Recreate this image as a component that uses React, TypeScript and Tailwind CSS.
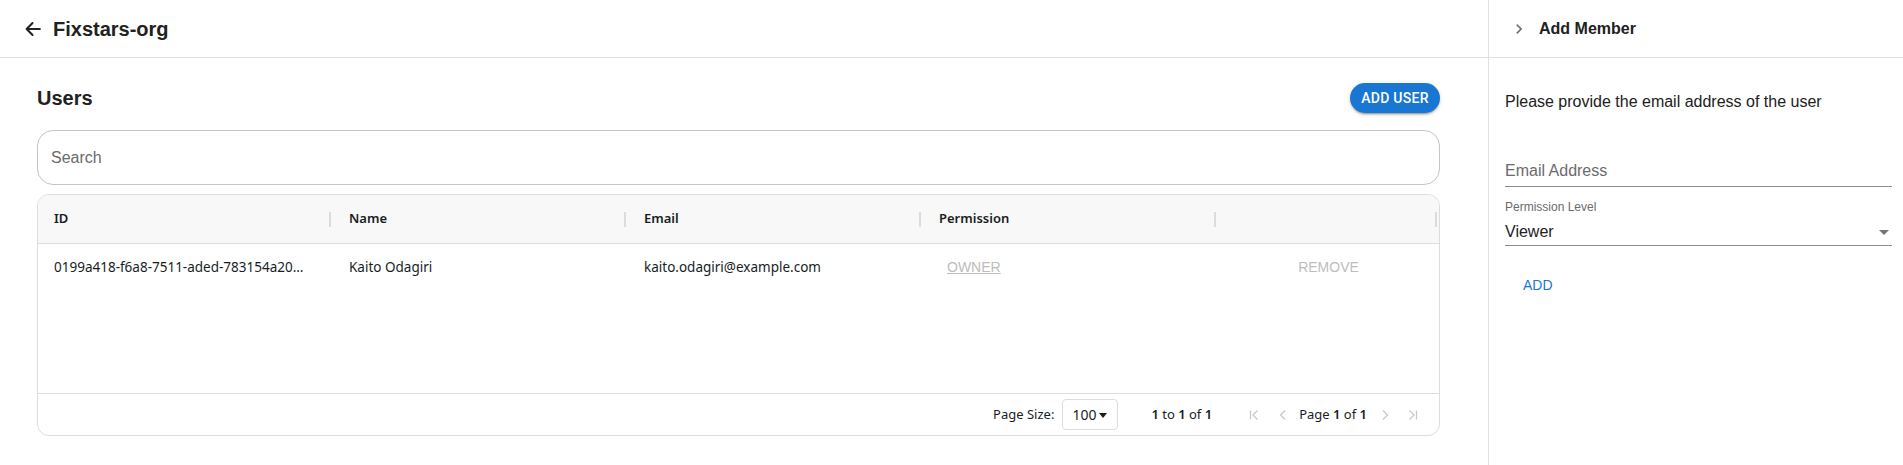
import React from 'react';

const arial = '[font-family:"Liberation_Sans",Arial,sans-serif]';
const grid = '[font-family:"Noto_Sans","Open_Sans",sans-serif]';

const columns = [
    { key: 'id', label: 'ID', width: 'w-[295px]' },
    { key: 'name', label: 'Name', width: 'w-[295px]' },
    { key: 'email', label: 'Email', width: 'w-[295px]' },
    { key: 'permission', label: 'Permission', width: 'w-[295px]' },
    { key: 'actions', label: '', width: 'flex-1' }
];

const users = [
    {
        id: '0199a418-f6a8-7511-aded-783154a20d6f',
        name: 'Kaito Odagiri',
        email: 'kaito.odagiri@example.com',
        permission: 'OWNER'
    }
];

const ArrowBack = () => (
    <svg width="22" height="22" viewBox="0 0 24 24" className="fill-none stroke-[#212121]" strokeWidth="2.2" strokeLinecap="round" strokeLinejoin="round">
        <path d="M19.5 12H5M11.5 5.5 5 12l6.5 6.5" />
    </svg>
);

const PagerIcon = ({ d }: { d: string }) => (
    <svg width="16" height="16" viewBox="0 0 16 16" className="fill-none stroke-[#c9c9c9]" strokeWidth="1.3">
        <path d={d} />
    </svg>
);

const App = () => {
    return (
        <div className={`flex w-[1903px] h-[465px] bg-white text-[#212121] ${arial}`}>
            <div className="flex flex-col flex-1 min-w-0">
                <div className="flex items-center gap-[9px] h-[58px] shrink-0 border-b border-[#e0e0e0] pl-[22px]">
                    <ArrowBack />
                    <h1 className="text-[20px] font-bold leading-none">Fixstars-org</h1>
                </div>

                <div className="flex flex-col pl-[37px] pr-12">
                    <div className="flex items-center justify-between h-[72px] pt-[8px]">
                        <h2 className="text-[20px] font-bold">Users</h2>
                        <button className="h-[30px] w-[90px] rounded-full bg-[#1976d2] text-white text-[14px] font-medium [font-family:Roboto,sans-serif] tracking-[0.02em] shadow-[0_3px_1px_-2px_rgba(0,0,0,0.2),0_2px_2px_0_rgba(0,0,0,0.14),0_1px_5px_0_rgba(0,0,0,0.12)]">
                            ADD USER
                        </button>
                    </div>

                    <div className="h-[55px] rounded-[16px] border border-[#c4c4c4] flex items-center px-[13px]">
                        <span className="text-[16px] text-[#6b6b6b]">Search</span>
                    </div>

                    <div className={`mt-[9px] h-[242px] rounded-[12px] border border-[#dddddd] flex flex-col overflow-hidden ${grid}`}>
                        <div className="flex h-[49px] shrink-0 bg-[#f8f8f8] border-b border-[#dddddd]">
                            {columns.map(col => (
                                <div key={col.key} className={`${col.width} relative flex items-center pl-[16px] text-[13px] font-semibold text-[#181d1f]`}>
                                    {col.label}
                                    <span className="absolute right-[2px] top-[17px] h-[15px] w-[2px] bg-[#dcdcdc]" />
                                </div>
                            ))}
                        </div>

                        <div className="flex-1">
                            {users.map(user => (
                                <div key={user.id} className="flex h-[46px] items-center text-[13.5px] text-[#181d1f]">
                                    <div className="w-[295px] pl-[16px]">
                                        <div className="w-[257px] truncate">{user.id}</div>
                                    </div>
                                    <div className="w-[295px] pl-[16px]">{user.name}</div>
                                    <div className="w-[295px] pl-[16px]">{user.email}</div>
                                    <div className="w-[295px] pl-[24px]">
                                        <span className={`${arial} text-[14px] underline text-[#bdbdbd]`}>{user.permission}</span>
                                    </div>
                                    <div className="flex-1 flex justify-center">
                                        <span className={`${arial} text-[14px] text-[#bdbdbd]`}>REMOVE</span>
                                    </div>
                                </div>
                            ))}
                        </div>

                        <div className="flex items-center justify-end h-[42px] shrink-0 border-t border-[#dddddd] text-[13px] text-[#181d1f] pr-[18px]">
                            <span>Page Size:</span>
                            <div className="ml-[8px] flex items-center gap-[2px] h-[31px] w-[56px] rounded-[4px] border border-[#dddddd] pl-[9px]">
                                <span className="text-[14px]">100</span>
                                <svg width="10" height="10" viewBox="0 0 10 10" className="fill-[#181d1f]">
                                    <path d="M1 3h8L5 8z" />
                                </svg>
                            </div>
                            <span className="ml-[33px]">
                                <strong className="font-semibold">1</strong> to <strong className="font-semibold">1</strong> of <strong className="font-semibold">1</strong>
                            </span>
                            <div className="ml-[34px] flex items-center">
                                <PagerIcon d="M4.5 3.5v9M11.5 3.5L7 8l4.5 4.5" />
                                <span className="ml-[13px]"><PagerIcon d="M10 3.5L5.5 8l4.5 4.5" /></span>
                                <span className="ml-[8px]">
                                    Page <strong className="font-semibold">1</strong> of <strong className="font-semibold">1</strong>
                                </span>
                                <span className="ml-[10px]"><PagerIcon d="M6 3.5L10.5 8 6 12.5" /></span>
                                <span className="ml-[12px]"><PagerIcon d="M4.5 3.5L9 8l-4.5 4.5M11.5 3.5v9" /></span>
                            </div>
                        </div>
                    </div>
                </div>
            </div>

            <div className="flex flex-col w-[415px] shrink-0 border-l border-[#e0e0e0]">
                <div className="flex items-center h-[58px] shrink-0 border-b border-[#e0e0e0] pl-[20px] gap-[10px]">
                    <svg width="20" height="20" viewBox="0 0 24 24" className="fill-[#757575]">
                        <path d="M10 6 8.59 7.41 13.17 12l-4.58 4.59L10 18l6-6z" />
                    </svg>
                    <span className="text-[16px] font-bold">Add Member</span>
                </div>

                <div className="flex flex-col pl-[16px] pr-[11px]">
                    <p className="mt-[34px] text-[16px] text-[#212121] leading-[20px]">Please provide the email address of the user</p>

                    <div className="mt-[49px] h-[26px] border-b border-[#8c8c8c] flex items-start">
                        <span className="text-[16px] text-[#6b6b6b] leading-[20px]">Email Address</span>
                    </div>

                    <div className="mt-[13px] flex flex-col">
                        <span className="text-[12px] text-[#6b6b6b] leading-[14px]">Permission Level</span>
                        <div className="mt-[4px] flex items-center justify-between h-[28px] border-b border-[#8c8c8c]">
                            <span className="text-[16px]">Viewer</span>
                            <svg width="24" height="24" viewBox="0 0 24 24" className="fill-[#757575] -mr-[4px]">
                                <path d="M7 10l5 5 5-5z" />
                            </svg>
                        </div>
                    </div>

                    <div className="mt-[27px] pl-[18px]">
                        <span className="text-[14px] text-[#1976d2]">ADD</span>
                    </div>
                </div>
            </div>
        </div>
    );
};

export default App;
